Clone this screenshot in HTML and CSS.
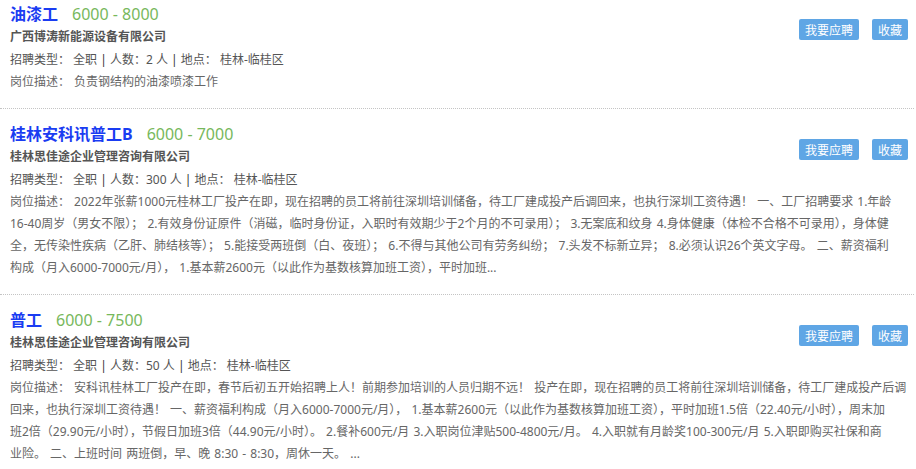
FILE: index.html
```html
<!DOCTYPE html>
<html lang="zh-CN">
<head>
<meta charset="utf-8">
<title>职位列表</title>
<link rel="stylesheet" href="styles.css">
</head>
<body>
<div class="job-list">
  <div class="job">
    <div class="job-head">
      <a class="job-title">油漆工</a><span class="salary">6000 - 8000</span>
    </div>
    <div class="company">广西博涛新能源设备有限公司</div>
    <div class="info">招聘类型： 全职 <span class="sep">|</span> 人数：2 人 <span class="sep">|</span> 地点： 桂林-临桂区</div>
    <div class="actions"><button class="btn">我要应聘</button><button class="btn">收藏</button></div>
    <div class="desc">岗位描述： 负责钢结构的油漆喷漆工作</div>
  </div>
  <div class="job">
    <div class="job-head">
      <a class="job-title">桂林安科讯普工B</a><span class="salary">6000 - 7000</span>
    </div>
    <div class="company">桂林思佳途企业管理咨询有限公司</div>
    <div class="info">招聘类型： 全职 <span class="sep">|</span> 人数：300 人 <span class="sep">|</span> 地点： 桂林-临桂区</div>
    <div class="actions"><button class="btn">我要应聘</button><button class="btn">收藏</button></div>
    <div class="desc">岗位描述： 2022年张薪1000元桂林工厂投产在即，现在招聘的员工将前往深圳培训储备，待工厂建成投产后调回来，也执行深圳工资待遇！ 一、工厂招聘要求 1.年龄<br>16-40周岁（男女不限）； 2.有效身份证原件（消磁，临时身份证，入职时有效期少于2个月的不可录用）； 3.无案底和纹身 4.身体健康（体检不合格不可录用），身体健<br>全，无传染性疾病（乙肝、肺结核等）； 5.能接受两班倒（白、夜班）； 6.不得与其他公司有劳务纠纷； 7.头发不标新立异； 8.必须认识26个英文字母。 二、薪资福利<br>构成（月入6000-7000元/月）， 1.基本薪2600元（以此作为基数核算加班工资），平时加班...</div>
  </div>
  <div class="job">
    <div class="job-head">
      <a class="job-title">普工</a><span class="salary">6000 - 7500</span>
    </div>
    <div class="company">桂林思佳途企业管理咨询有限公司</div>
    <div class="info">招聘类型： 全职 <span class="sep">|</span> 人数：50 人 <span class="sep">|</span> 地点： 桂林-临桂区</div>
    <div class="actions"><button class="btn">我要应聘</button><button class="btn">收藏</button></div>
    <div class="desc">岗位描述： 安科讯桂林工厂投产在即，春节后初五开始招聘上人！前期参加培训的人员归期不远！ 投产在即，现在招聘的员工将前往深圳培训储备，待工厂建成投产后调<br>回来，也执行深圳工资待遇！ 一、薪资福利构成（月入6000-7000元/月）， 1.基本薪2600元（以此作为基数核算加班工资），平时加班1.5倍（22.40元/小时），周末加<br>班2倍（29.90元/小时），节假日加班3倍（44.90元/小时）。 2.餐补600元/月 3.入职岗位津贴500-4800元/月。 4.入职就有月龄奖100-300元/月 5.入职即购买社保和商<br>业险。 二、上班时间 两班倒，早、晚 8:30 - 8:30，周休一天。 ...</div>
  </div>
</div>
</body>
</html>
```
FILE: styles.css
```css
html, body {
  margin: 0;
  padding: 0;
  background: #fff;
}
body {
  font-family: "Noto Sans", "Noto Sans CJK SC", sans-serif;
  font-size: 12px;
  color: #666;
  overflow: hidden;
}
.job-list {
  margin-top: -11px;
  width: 914px;
}
.job {
  display: grid;
  grid-template-columns: 1fr auto;
  padding: 13px 6px 15px 10px;
  border-bottom: 1px dotted #c4c4c4;
}
.job-head {
  grid-column: 1;
  grid-row: 1;
  height: 24px;
  line-height: 24px;
  white-space: nowrap;
}
.job-title {
  font-size: 16px;
  font-weight: bold;
  color: #1a3cf2;
  text-decoration: none;
}
.salary {
  font-size: 16px;
  color: #77b85c;
  margin-left: 14px;
}
.company {
  grid-column: 1;
  grid-row: 2;
  line-height: 22px;
  margin-bottom: 1px;
  font-weight: bold;
  color: #555;
}
.info {
  grid-column: 1;
  grid-row: 3;
  line-height: 22px;
  color: #555;
  white-space: pre;
}
.sep {
  color: #333;
}
.actions {
  grid-column: 2;
  grid-row: 1 / 4;
  align-self: start;
  display: flex;
  gap: 13px;
  padding-top: 17px;
}
.btn {
  font-family: "Noto Sans CJK SC", sans-serif;
  font-size: 12px;
  color: #fff;
  background: #5fa6e5;
  border: none;
  border-radius: 2px;
  height: 21px;
  padding: 0 6px;
  line-height: 21px;
}
.desc {
  grid-column: 1 / 3;
  grid-row: 4;
  line-height: 22px;
  color: #666;
  word-spacing: 1px;
}
```
